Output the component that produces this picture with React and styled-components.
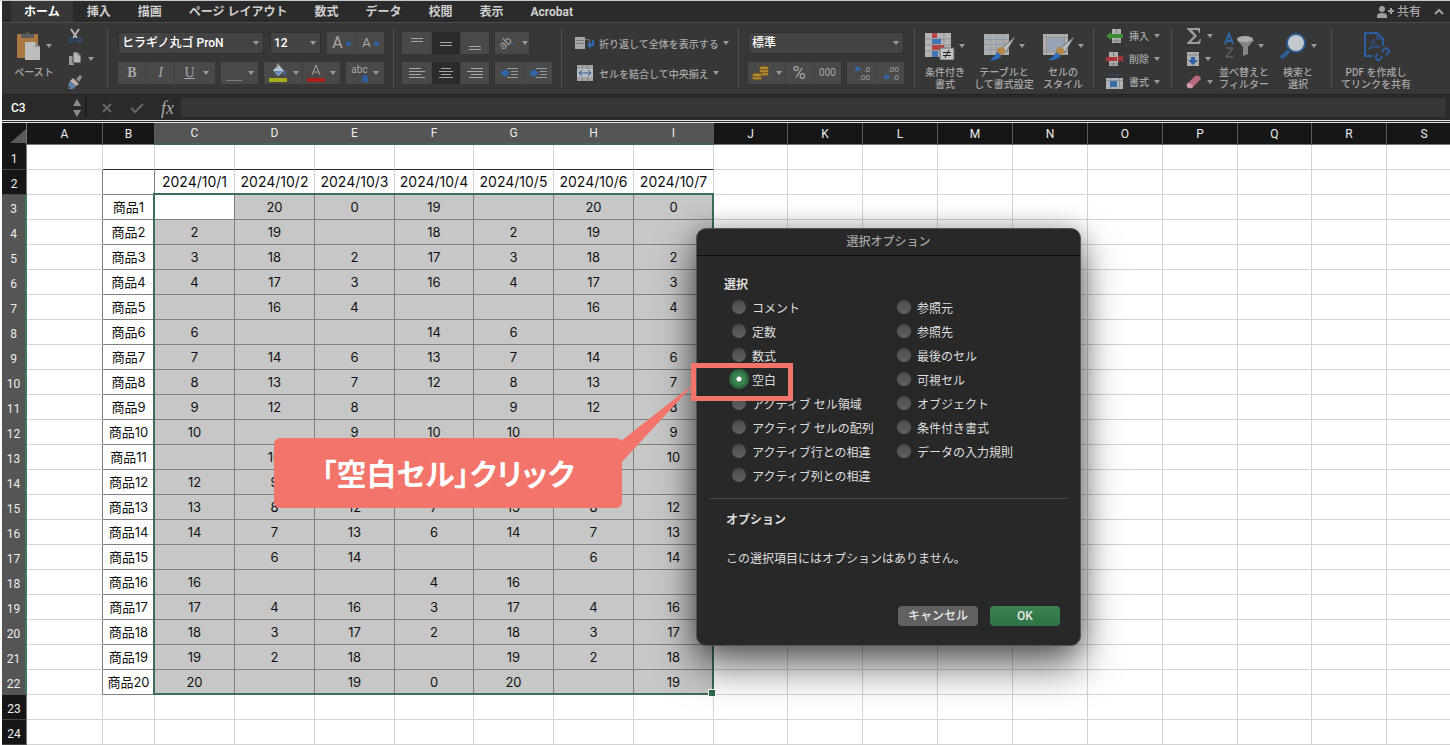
import React from 'react';
import styled, { createGlobalStyle } from 'styled-components';

const TABS = ['ホーム', '挿入', '描画', 'ページ レイアウト', '数式', 'データ', '校閲', '表示', 'Acrobat'];

const COLUMNS = [
  ['A', 76], ['B', 52], ['C', 80], ['D', 80], ['E', 80], ['F', 79], ['G', 80], ['H', 80], ['I', 80], ['J', 74],
  ['K', 75], ['L', 75], ['M', 75], ['N', 75], ['O', 75], ['P', 75], ['Q', 74], ['R', 75], ['S', 75],
];

const DATES = ['2024/10/1', '2024/10/2', '2024/10/3', '2024/10/4', '2024/10/5', '2024/10/6', '2024/10/7'];

const STOCK = [
  ['', 20, 0, 19, '', 20, 0],
  [2, 19, '', 18, 2, 19, ''],
  [3, 18, 2, 17, 3, 18, 2],
  [4, 17, 3, 16, 4, 17, 3],
  ['', 16, 4, '', '', 16, 4],
  [6, '', '', 14, 6, '', ''],
  [7, 14, 6, 13, 7, 14, 6],
  [8, 13, 7, 12, 8, 13, 7],
  [9, 12, 8, '', 9, 12, 8],
  [10, '', 9, 10, 10, '', 9],
  ['', 10, '', '', '', '', 10],
  [12, 9, '', '', '', '', ''],
  [13, 8, 12, 7, 13, 8, 12],
  [14, 7, 13, 6, 14, 7, 13],
  ['', 6, 14, '', '', 6, 14],
  [16, '', '', 4, 16, '', ''],
  [17, 4, 16, 3, 17, 4, 16],
  [18, 3, 17, 2, 18, 3, 17],
  [19, 2, 18, '', 19, 2, 18],
  [20, '', 19, 0, 20, '', 19],
];

const OPTIONS = [
  ['コメント', '定数', '数式', '空白', 'アクティブ セル領域', 'アクティブ セルの配列', 'アクティブ行との相違', 'アクティブ列との相違'],
  ['参照元', '参照先', '最後のセル', '可視セル', 'オブジェクト', '条件付き書式', 'データの入力規則'],
];

const ROW_COUNT = 24;

const cellValue = (row, col) => {
  if (row === 2 && col >= 2 && col <= 8) return DATES[col - 2];
  if (row >= 3 && row <= 22) {
    if (col === 1) return `商品${row - 2}`;
    if (col >= 2 && col <= 8) return STOCK[row - 3][col - 2];
  }
  return '';
};

/* ---------- icons ---------- */

const PasteIcon = () => (
  <svg width="26" height="30" viewBox="0 0 26 30">
    <rect x="1" y="3" width="21" height="24" rx="1" fill="#a9773f" />
    <path d="M5 7V3h4q2-4 5 0h4v4z" fill="#5c5c5c" />
    <path d="M9 11h10l5 5v13H9z" fill="#bdbdbd" />
    <path d="M19 11l5 5h-5z" fill="#8d8d8d" />
  </svg>
);

const CutIcon = () => (
  <svg width="16" height="16" viewBox="0 0 16 16" fill="none">
    <path d="M4 1l6 9M12 1L6 10" stroke="#b5b5b5" strokeWidth="2" />
    <circle cx="4" cy="12" r="2" stroke="#2e4a6d" strokeWidth="2" />
    <circle cx="12" cy="12" r="2" stroke="#2e4a6d" strokeWidth="2" />
  </svg>
);

const CopyIcon = () => (
  <svg width="16" height="16" viewBox="0 0 16 16">
    <path d="M2 5h5v9H2z" fill="#9c9c9c" />
    <path d="M6 1h5l3 3v8H6z" fill="#b9b9b9" stroke="#3a3a3a" />
    <path d="M11 1v3h3" fill="none" stroke="#5a5a5a" />
  </svg>
);

const BrushIcon = () => (
  <svg width="16" height="16" viewBox="0 0 16 16">
    <path d="M9 5l4-4 2 2-3 5z" fill="#8d8d8d" />
    <path d="M6 4l6 6-3 2-6-5z" fill="#c2b0ac" />
    <path d="M3 7l6 5-3 3q-3 1-5-1l3-1-3-1z" fill="#5d83ad" />
  </svg>
);

const BucketIcon = () => (
  <svg width="20" height="20" viewBox="0 0 20 20">
    <path d="M5 7l6-5 5 6-6 5z" fill="#b7c4d2" />
    <path d="M9 6V1q2-1 2 2" fill="none" stroke="#999" />
    <path d="M6 8h9l-5 4z" fill="#5b86b8" />
    <path d="M16 7q3 3 1 5-2-1-1-5z" fill="#3f74b5" />
    <rect x="1" y="15" width="18" height="4" fill="#a8ad1e" />
  </svg>
);

const FontColorIcon = () => (
  <svg width="18" height="20" viewBox="0 0 18 20">
    <path d="M5 12l4-10 4 10M6 9h6" fill="none" stroke="#a3a3a3" />
    <rect x="0" y="15" width="18" height="4" fill="#ab1f1a" />
  </svg>
);

const BorderIcon = () => (
  <svg width="18" height="20" viewBox="0 0 18 20">
    <path d="M1 17.500h16" stroke="#7d7d7d" />
  </svg>
);

const LinesIcon = ({ lines }) => (
  <svg width="18" height="18" viewBox="0 0 18 18" stroke="#a6a6a6">
    {lines.map(([x1, x2, y]) => (
      <path key={y} d={`M${x1} ${y}.5H${x2}`} />
    ))}
  </svg>
);

const IndentIcon = () => (
  <svg width="20" height="16" viewBox="0 0 20 16">
    <path d="M7 3.500h11M11 6.500h7M11 9.500h7M7 12.500h11" stroke="#9a9a9a" />
    <path d="M5 4l5 4-5 4-1-2H1V6h3z" fill="#2e66a8" />
  </svg>
);

const OrientationIcon = () => (
  <svg width="20" height="18" viewBox="0 0 20 18">
    <text x="2" y="14" transform="rotate(-42 7 10)" fontSize="12" fill="#a0a0a0" fontFamily="Roboto, sans-serif">ab</text>
    <path d="M13 9h4l-2 3z" fill="#2e5c92" />
  </svg>
);

const WrapIcon = () => (
  <svg width="20" height="14" viewBox="0 0 20 14">
    <rect x="0" y="1" width="10" height="12" fill="#a6a6a6" />
    <path d="M1 4.500h8M1 7.500h8" stroke="#777" />
    <path d="M10 3.500h4v3" fill="none" stroke="#7a7a7a" />
    <path d="M18 4v5h-3" fill="none" stroke="#2f69ad" strokeWidth="2" />
    <path d="M12 9l4-4v8z" fill="#2f69ad" />
  </svg>
);

const MergeIcon = () => (
  <svg width="16" height="16" viewBox="0 0 16 16">
    <rect x="0" y="0" width="16" height="16" fill="#a3a3a3" />
    <path d="M5.500 0v4M10.500 0v4M5.500 12v4M10.500 12v4" stroke="#858585" />
    <rect x="0" y="4" width="16" height="8" fill="#b5bcc4" />
    <path d="M2 8h12M5 5L2 8l3 3M11 5l3 3-3 3" fill="none" stroke="#2c548a" />
  </svg>
);

const CoinsIcon = () => (
  <svg width="20" height="16" viewBox="0 0 20 16" fill="#b08a35" stroke="#6a5220">
    <ellipse cx="13" cy="9" rx="5" ry="2" />
    <ellipse cx="13" cy="6" rx="5" ry="2" />
    <ellipse cx="13" cy="3" rx="5" ry="2" />
    <ellipse cx="6" cy="13" rx="5" ry="2" />
    <ellipse cx="6" cy="10" rx="5" ry="2" />
  </svg>
);

const DecimalIcon = ({ top, bottom, up }) => (
  <svg width="20" height="18" viewBox="0 0 20 18" fontSize="8" fill="#a3a3a3" fontFamily="Roboto, sans-serif">
    <text x="18" y="8" textAnchor="end">{top}</text>
    <text x="18" y="16" textAnchor="end">{bottom}</text>
    <path d={up ? 'M2 5l4-3v2h3v2H6v2z' : 'M2 13l4-3v2h3v2H6v2z'} fill="#2f69ad" />
  </svg>
);

const ConditionalIcon = () => (
  <svg width="30" height="28" viewBox="0 0 30 28">
    <rect x="0" y="1" width="26" height="24" fill="#b3b3b3" />
    <path d="M0 7h26M0 13h26M0 19h26M19 1v24" stroke="#919191" />
    <path d="M7 1h5v5H7zM7 13h12v5H7z" fill="#b54444" />
    <path d="M7 7h9v5H7zM7 19h6v6H7z" fill="#3f74b5" />
    <rect x="15" y="16" width="14" height="12" fill="#c2c2c2" stroke="#666" />
    <path d="M18 20.500h8M18 23.500h8M24 18l-4 8" stroke="#222" />
  </svg>
);

const SheetBrushIcon = ({ frame }) => (
  <svg width="32" height="30" viewBox="0 0 32 30">
    <rect x="1" y="3" width="25" height="21" fill="#adadad" />
    {frame ? (
      <g>
        <path d="M1 6.500h25M1 20.500h25M4.500 3v21M22.500 3v21" stroke="#979797" />
        <rect x="5" y="7" width="17" height="13" fill="#98a3b6" />
      </g>
    ) : (
      <path d="M1 8.500h25M1 13.500h25M1 18.500h25M7.500 3v21M13.500 3v21M20.500 3v21" stroke="#8d9cb0" />
    )}
    <path d="M32 6l-9 15-4-4z" fill="#b9bfc2" stroke="#707070" />
    <ellipse cx="18" cy="20" rx="4" ry="4" fill="#b1874a" />
    <path d="M14 21l5 4q-5 5-13 4 5-2 8-8z" fill="#2d6cb8" />
  </svg>
);

const CellsIcon = ({ kind }) => (
  <svg width="18" height="16" viewBox="0 0 18 16">
    {kind === 'format' ? (
      <g>
        <rect x="0" y="4" width="17" height="11" fill="#adb3b8" />
        <path d="M0 6.500h17M4.500 4v11M13.500 4v11" stroke="#8d9297" />
        <rect x="4" y="7" width="7" height="6" fill="#3c6ea5" />
        <path d="M2 1h11" stroke="#2f4f7d" />
      </g>
    ) : (
      <g>
        <rect x={kind === 'insert' ? 6 : 3} y="1" width="9" height="14" fill="#b0b0b0" />
        <path d={kind === 'insert' ? 'M10.500 1v4M10.500 11v4M6 13h9' : 'M7.500 1v4M7.500 11v4M3 13h9'} stroke="#7a7a7a" />
        {kind === 'insert' ? (
          <path d="M0 8l5-4v2h12v4H5v2z" fill="#3f8a35" />
        ) : (
          <g>
            <rect x="0" y="6" width="11" height="4" fill="#b0343a" />
            <path d="M12 5l5 5M17 5l-5 5" stroke="#b0343a" strokeWidth="2" />
          </g>
        )}
      </g>
    )}
  </svg>
);

const SigmaIcon = () => (
  <svg width="16" height="18" viewBox="0 0 16 18">
    <path d="M1 1h13v5h-1q0-3-3-3H6l5 6-6 6h6q2 0 3-3h1l-1 5H1v-1l7-7-7-7z" fill="#9c9c9c" />
  </svg>
);

const FillDownIcon = () => (
  <svg width="14" height="16" viewBox="0 0 14 16">
    <rect x="1" y="1" width="12" height="14" fill="#adadad" />
    <path d="M1 4h12" stroke="#858585" />
    <path d="M5 6h4v3h3l-5 5-5-5h3z" fill="#2f62a3" />
  </svg>
);

const EraserIcon = () => (
  <svg width="16" height="16" viewBox="0 0 16 16">
    <path d="M1 10l8-8q2-1 4 0 2 1 2 3l-8 8q-2 2-4 1-3-1-2-4z" fill="#b56a7c" />
    <path d="M1 10q1-2 4 0 2 1 2 3-2 2-4 1-3-1-2-4z" fill="#d39aa8" />
  </svg>
);

const SortIcon = () => (
  <svg width="30" height="28" viewBox="0 0 30 28">
    <path d="M1 12L5 2l4 10M2 9h6" fill="none" stroke="#2f69ad" strokeWidth="2" />
    <path d="M2 16h7l-7 9h7" fill="none" stroke="#777" />
    <path d="M13 8l6 7v9l5-2v-7l6-7z" fill="#858585" />
    <ellipse cx="21" cy="7" rx="8" ry="3" fill="#adadad" />
  </svg>
);

const FindIcon = () => (
  <svg width="28" height="28" viewBox="0 0 28 28">
    <path d="M10 19l-8 7" stroke="#2d5f96" strokeWidth="4" />
    <circle cx="17" cy="11" r="9" fill="#c2c8cc" stroke="#2c5c92" strokeWidth="2" />
  </svg>
);

const PdfIcon = () => (
  <svg width="28" height="30" viewBox="0 0 28 30" fill="none" stroke="#2c5da0" strokeWidth="2">
    <path d="M11 25H3V2h12l6 6v7" />
    <path d="M15 2v6h6" strokeWidth="1" />
    <path d="M6 18q5-3 5-10 1 7 7 8-7-1-12 2z" strokeWidth="1" />
    <path d="M15 23l-1 2q-1 3 2 4 2 0 3-2l1-2M20 21l1-2q2-3 5-1 2 2 0 4l-2 2" />
  </svg>
);

const ShareIcon = () => (
  <svg width="18" height="14" viewBox="0 0 18 14" fill="#a0a0a0">
    <circle cx="6" cy="4" r="3" />
    <path d="M1 13v-2q0-3 5-3t5 3v2z" />
    <path d="M12 5h6v2h-6zM14 3h2v6h-2z" />
  </svg>
);

const ChevronIcon = () => (
  <svg width="10" height="8" viewBox="0 0 10 8">
    <path d="M1 6l4-4 4 4" fill="none" stroke="#a0a0a0" strokeWidth="2" />
  </svg>
);

const StepperIcon = () => (
  <svg width="8" height="18" viewBox="0 0 8 18" fill="#8c8c8c">
    <path d="M4 0l4 7H0zM4 18l4-7H0z" />
  </svg>
);

/* ---------- page ---------- */

const Tool = ({ label, width, active, caret, children }) => (
  <ToolButton type="button" aria-label={label} $width={width} $active={active}>
    {children}
    {caret && <Caret />}
  </ToolButton>
);

const LargeTool = ({ width, icon, lines, caret = true }) => (
  <LargeButton type="button" $width={width}>
    <span className="icon">
      {icon}
      {caret && <Caret />}
    </span>
    {lines.map((line) => (
      <span className="line" key={line}>{line}</span>
    ))}
  </LargeButton>
);

const Picker = ({ label, value, width }) => (
  <PickerBox $width={width}>
    <select aria-label={label} defaultValue={value}>
      <option>{value}</option>
    </select>
    <Caret />
  </PickerBox>
);

const Ribbon = () => (
  <RibbonBar>
    <Group $width={105} $start={5}>
      <LargeTool width={54} icon={<PasteIcon />} lines={['ペースト']} />
      <MiniColumn $start={6}>
        <MiniButton type="button" aria-label="切り取り"><CutIcon /></MiniButton>
        <MiniButton type="button" aria-label="コピー"><CopyIcon /><Caret /></MiniButton>
        <MiniButton type="button" aria-label="書式のコピー"><BrushIcon /></MiniButton>
      </MiniColumn>
    </Group>
    <Divider />
    <Group $width={285} $start={10}>
      <ToolRows>
        <ToolRow>
          <Picker label="フォント" value="ヒラギノ丸ゴ ProN" width={146} />
          <Picker label="フォント サイズ" value="12" width={51} />
          <Segment>
            <Tool label="拡大" width={29}><Glyph $size={16}>A</Glyph><Dot /></Tool>
            <Tool label="縮小" width={28}><Glyph $size={13}>A</Glyph><Dot /></Tool>
          </Segment>
        </ToolRow>
        <ToolRow>
          <Segment>
            <Tool label="太字" width={28}><Glyph $size={14} $serif><b>B</b></Glyph></Tool>
            <Tool label="斜体" width={28}><Glyph $size={14} $serif><i>I</i></Glyph></Tool>
            <Tool label="下線" width={41} caret><Glyph $size={14} $serif $wide><u>U</u></Glyph></Tool>
          </Segment>
          <Segment><Tool label="罫線" width={37} caret><BorderIcon /></Tool></Segment>
          <Segment>
            <Tool label="塗りつぶし" width={38} caret><BucketIcon /></Tool>
            <Tool label="文字色" width={38} caret><FontColorIcon /></Tool>
          </Segment>
          <Segment><Tool label="ふりがな" width={38} caret><Ruby>abc<i /></Ruby></Tool></Segment>
        </ToolRow>
      </ToolRows>
    </Group>
    <Divider />
    <Group $width={167} $start={8}>
      <ToolRows>
        <ToolRow>
          <Segment>
            <Tool label="上揃え" width={29}><LinesIcon lines={[[3, 15, 4], [3, 15, 7]]} /></Tool>
            <Tool label="中央" width={29} active><LinesIcon lines={[[3, 15, 8], [3, 15, 11]]} /></Tool>
            <Tool label="下揃え" width={29}><LinesIcon lines={[[3, 15, 12], [3, 15, 15]]} /></Tool>
          </Segment>
          <Segment><Tool label="方向" width={34} caret><OrientationIcon /></Tool></Segment>
        </ToolRow>
        <ToolRow>
          <Segment>
            <Tool label="左揃え" width={29}><LinesIcon lines={[[1, 13, 4], [1, 17, 7], [1, 13, 10], [1, 17, 13]]} /></Tool>
            <Tool label="中央揃え" width={29} active><LinesIcon lines={[[4, 14, 4], [2, 16, 7], [4, 14, 10], [2, 16, 13]]} /></Tool>
            <Tool label="右揃え" width={29}><LinesIcon lines={[[5, 17, 4], [1, 17, 7], [5, 17, 10], [3, 17, 13]]} /></Tool>
          </Segment>
          <Segment>
            <Tool label="インデント解除" width={29}><IndentIcon /></Tool>
            <Tool label="インデント" width={28}><IndentIcon /></Tool>
          </Segment>
        </ToolRow>
      </ToolRows>
    </Group>
    <Divider />
    <Group $width={176} $start={13}>
      <ToolRows>
        <TextButton type="button"><WrapIcon />折り返して全体を表示する<Caret /></TextButton>
        <TextButton type="button"><MergeIcon />セルを結合して中央揃え<Caret /></TextButton>
      </ToolRows>
    </Group>
    <Divider />
    <Group $width={175} $start={9}>
      <ToolRows>
        <ToolRow><Picker label="表示形式" value="標準" width={156} /></ToolRow>
        <ToolRow>
          <Segment>
            <Tool label="通貨" width={36} caret><CoinsIcon /></Tool>
            <Tool label="パーセント" width={29}><Glyph $size={18}>%</Glyph></Tool>
            <Tool label="桁区切り" width={28}><Glyph $size={10}>000</Glyph></Tool>
          </Segment>
          <Segment>
            <Tool label="小数点以下を増やす" width={29}><DecimalIcon top=".0" bottom=".00" up /></Tool>
            <Tool label="小数点以下を減らす" width={28}><DecimalIcon top=".00" bottom=".0" /></Tool>
          </Segment>
        </ToolRow>
      </ToolRows>
    </Group>
    <Divider />
    <Group $width={178} $start={2}>
      <LargeTool width={56} icon={<ConditionalIcon />} lines={['条件付き', '書式']} />
      <LargeTool width={62} icon={<SheetBrushIcon />} lines={['テーブルと', 'して書式設定']} />
      <LargeTool width={56} icon={<SheetBrushIcon frame />} lines={['セルの', 'スタイル']} />
    </Group>
    <Divider />
    <Group $width={77} $start={12}>
      <MiniColumn>
        <MiniButton type="button"><CellsIcon kind="insert" />挿入<Caret /></MiniButton>
        <MiniButton type="button"><CellsIcon kind="delete" />削除<Caret /></MiniButton>
        <MiniButton type="button"><CellsIcon kind="format" />書式<Caret /></MiniButton>
      </MiniColumn>
    </Group>
    <Divider />
    <Group $width={159} $start={14}>
      <MiniColumn>
        <MiniButton type="button" aria-label="合計"><SigmaIcon /><Caret /></MiniButton>
        <MiniButton type="button" aria-label="フィル"><FillDownIcon /><Caret /></MiniButton>
        <MiniButton type="button" aria-label="クリア"><EraserIcon /><Caret /></MiniButton>
      </MiniColumn>
      <LargeTool width={62} icon={<SortIcon />} lines={['並べ替えと', 'フィルター']} />
      <LargeTool width={46} icon={<FindIcon />} lines={['検索と', '選択']} />
    </Group>
    <Divider />
    <Group $width={90} $start={6}>
      <LargeTool width={76} icon={<PdfIcon />} lines={['PDF を作成し', 'てリンクを共有']} caret={false} />
    </Group>
  </RibbonBar>
);

const Sheet = () => (
  <Grid>
    <colgroup>
      <Col $width={25} />
      {COLUMNS.map(([name, width]) => <Col key={name} $width={width} />)}
    </colgroup>
    <thead>
      <tr>
        <Corner aria-label="すべて選択">
          <svg width="16" height="14" viewBox="0 0 16 14"><path d="M16 0v14H0z" fill="#5a5a5a" /></svg>
        </Corner>
        {COLUMNS.map(([name], i) => (
          <ColumnHead key={name} scope="col" $selected={i >= 2 && i <= 8}>{name}</ColumnHead>
        ))}
      </tr>
    </thead>
    <tbody>
      {Array.from({ length: ROW_COUNT }, (_, i) => i + 1).map((row) => (
        <tr key={row}>
          <RowHead scope="row" $selected={row >= 3 && row <= 22}>{row}</RowHead>
          {COLUMNS.map(([name], col) => {
            const inRange = row >= 3 && row <= 22 && col >= 2 && col <= 8;
            return (
              <Cell
                key={name}
                $date={row === 2}
                $filled={inRange && !(row === 3 && col === 2)}
                $right={row >= 2 && row <= 22 && col <= 8 && (row > 2 || col < 2)}
                $bottom={row >= 2 && row <= 22 && col >= 1 && col <= 8}
                $top={row === 1 && col >= 1 && col <= 8}
              >
                {cellValue(row, col)}
              </Cell>
            );
          })}
        </tr>
      ))}
    </tbody>
  </Grid>
);

const OptionsDialog = () => (
  <Dialog role="dialog" aria-labelledby="dialog-title">
    <h1 id="dialog-title">選択オプション</h1>
    <div className="body">
      <h2>選択</h2>
      <Choices>
        {OPTIONS.map((list) => (
          <div key={list[0]}>
            {list.map((name) => (
              <Choice key={name}>
                <input type="radio" name="target" defaultChecked={name === '空白'} />
                {name}
              </Choice>
            ))}
          </div>
        ))}
      </Choices>
      <hr />
      <div className="details">
        <h2>オプション</h2>
        <p>この選択項目にはオプションはありません。</p>
      </div>
    </div>
    <Actions>
      <ActionButton type="button" $width={80}>キャンセル</ActionButton>
      <ActionButton type="button" $width={70} $primary>OK</ActionButton>
    </Actions>
  </Dialog>
);

const App = () => {
  return (
    <Page>
      <GlobalStyle />
      <TabBar>
        {TABS.map((tab, i) => (
          <Tab key={tab} type="button" $active={i === 0}>{tab}</Tab>
        ))}
        <Share type="button"><ShareIcon />共有</Share>
        <Collapse type="button" aria-label="リボンを折りたたむ"><ChevronIcon /></Collapse>
      </TabBar>
      <Ribbon />
      <FormulaBar>
        <NameBox>
          <input aria-label="名前ボックス" defaultValue="C3" />
          <StepperIcon />
        </NameBox>
        <FormulaTools>
          <svg width="12" height="12" viewBox="0 0 12 12"><path d="M2 2l8 8M10 2l-8 8" stroke="#666" strokeWidth="2" /></svg>
          <svg width="14" height="12" viewBox="0 0 14 12"><path d="M1 6l4 4 8-8" fill="none" stroke="#666" strokeWidth="2" /></svg>
          <em>fx</em>
        </FormulaTools>
        <FormulaInput aria-label="数式バー" />
      </FormulaBar>
      <Workspace>
        <Sheet />
        <Selection />
        <OptionsDialog />
        <Pointer width="74" height="84" viewBox="0 0 74 84">
          <path d="M0 58L74 0 0 80z" fill="#f3746b" />
        </Pointer>
        <Highlight />
        <Callout>「空白セル」クリック</Callout>
      </Workspace>
    </Page>
  );
};

export default App;

const GlobalStyle = createGlobalStyle`
  body {
    margin: 0;
    background: #fff;
  }

  * {
    box-sizing: border-box;
  }

  body, button, input, select {
    font-family: Roboto, 'Noto Sans CJK JP', sans-serif;
  }

  button {
    border: 0;
    padding: 0;
    background: none;
    color: #a8a8a8;
  }

  svg {
    flex: none;
    display: block;
  }
`;

const Page = styled.div`
  padding-left: 2px;
  border-top: 1px solid #c5cbc9;
  overflow: hidden;
`;

const TabBar = styled.nav`
  display: flex;
  gap: 1px;
  height: 21px;
  padding-left: 9px;
  background: #2b2b2b;
`;

const Tab = styled.button`
  padding: 0 13px;
  font-size: 12px;
  font-weight: 700;
  line-height: 18px;
  white-space: nowrap;
  color: ${({ $active }) => ($active ? '#fff' : '#cfcfcf')};
  background: ${({ $active }) => ($active ? '#373737' : 'none')};
`;

const Share = styled.button`
  display: flex;
  align-items: center;
  gap: 3px;
  margin-left: auto;
  font-size: 12px;
  font-weight: 500;
  line-height: 18px;
`;

const Collapse = styled.button`
  padding: 0 6px 0 12px;
`;

const RibbonBar = styled.div`
  display: flex;
  height: 72px;
  padding-top: 1px;
  border-top: 1px solid #4c4c4c;
  background: #373737;
`;

const Group = styled.div`
  display: flex;
  flex: none;
  width: ${({ $width }) => $width}px;
  padding-left: ${({ $start }) => $start}px;
`;

const Divider = styled.div`
  flex: none;
  width: 1px;
  height: 60px;
  margin-top: 4px;
  background: #505050;
`;

const Caret = styled.span`
  flex: none;
  border: 3px solid transparent;
  border-top: 4px solid #9a9a9a;
  border-bottom: 0;
`;

const ToolRows = styled.div`
  display: flex;
  flex-direction: column;
  gap: 8px;
  padding-top: 8px;
`;

const ToolRow = styled.div`
  display: flex;
  gap: 6px;
  height: 22px;
`;

const Segment = styled.div`
  display: flex;
  background: #494949;
`;

const ToolButton = styled.button`
  display: flex;
  align-items: center;
  justify-content: center;
  gap: 5px;
  width: ${({ $width }) => $width}px;
  height: 22px;
  overflow: hidden;
  background: ${({ $active }) => ($active ? '#2b2b2b' : 'none')};

  & + & {
    border-left: 1px solid #424242;
  }
`;

const Glyph = styled.span`
  font-family: ${({ $serif }) => ($serif ? "'Liberation Serif', serif" : 'Roboto, sans-serif')};
  font-size: ${({ $size }) => $size}px;
  line-height: 20px;
  padding: 0 ${({ $wide }) => ($wide ? 3 : 0)}px;
`;

const Dot = styled.span`
  width: 5px;
  height: 5px;
  margin-left: -2px;
  border-radius: 50%;
  background: #2e5f9c;
`;

const Ruby = styled.span`
  display: flex;
  flex-direction: column;
  align-items: flex-end;
  font-size: 10px;
  line-height: 10px;

  i {
    width: 6px;
    height: 7px;
    border-radius: 3px 3px 0 0;
    background: #2f5f9a;
  }
`;

const PickerBox = styled.div`
  display: flex;
  align-items: center;
  width: ${({ $width }) => $width}px;
  height: 22px;
  padding-right: 4px;
  border: 1px solid #303030;
  background: #434343;

  select {
    flex: 1;
    min-width: 0;
    height: 20px;
    padding: 0 3px;
    border: 0;
    appearance: none;
    background: none;
    color: #fff;
    font-size: 12px;
    font-weight: 500;
  }
`;

const TextButton = styled.button`
  display: flex;
  align-items: center;
  gap: 4px;
  height: 22px;
  font-size: 10px;
  font-weight: 500;
  white-space: nowrap;

  svg {
    width: 20px;
  }
`;

const LargeButton = styled.button`
  display: flex;
  flex-direction: column;
  align-items: center;
  width: ${({ $width }) => $width}px;
  padding-top: 7px;
  font-size: 10px;
  font-weight: 500;

  .icon {
    display: flex;
    align-items: center;
    gap: 4px;
    height: 30px;
    margin-bottom: 6px;
  }

  .line {
    line-height: 12px;
    white-space: nowrap;
  }
`;

const MiniColumn = styled.div`
  display: flex;
  flex-direction: column;
  margin-left: ${({ $start = 0 }) => $start}px;
`;

const MiniButton = styled.button`
  display: flex;
  align-items: center;
  gap: 5px;
  height: 23px;
  font-size: 10px;
  font-weight: 500;
  white-space: nowrap;
`;

const FormulaBar = styled.div`
  display: flex;
  height: 29px;
  padding: 3px 4px 3px 0;
  border-top: 1px solid #222;
  border-bottom: 3px double #e4e4e4;
  background: #2a2a2a;
`;

const NameBox = styled.div`
  display: flex;
  align-items: center;
  width: 85px;
  padding-right: 4px;
  border-right: 2px solid #1e1e1e;

  input {
    flex: 1;
    min-width: 0;
    padding: 0 9px;
    border: 0;
    background: none;
    color: #fff;
    font-size: 12px;
    font-weight: 500;
  }
`;

const FormulaTools = styled.div`
  display: flex;
  align-items: center;
  gap: 17px;
  width: 94px;
  padding-left: 14px;

  em {
    color: #a8a8a8;
    font-family: 'Liberation Serif', serif;
    font-size: 18px;
    line-height: 20px;
  }
`;

const FormulaInput = styled.input`
  flex: 1;
  min-width: 0;
  border: 0;
  background: #373737;
  color: #fff;
`;

const Workspace = styled.main`
  position: relative;
`;

const Grid = styled.table`
  table-layout: fixed;
  width: 0;
  border-collapse: separate;
  border-spacing: 0;
`;

const Col = styled.col`
  width: ${({ $width }) => $width}px;
`;

const Corner = styled.td`
  height: 22px;
  padding: 3px 0 0 8px;
  border-right: 1px solid #777;
  background: #161616;
`;

const ColumnHead = styled.th`
  height: 22px;
  padding: 0;
  border-right: 1px solid ${({ $selected }) => ($selected ? '#555' : '#5a5a5a')};
  border-bottom: ${({ $selected }) => ($selected ? '2px solid #3d6b57' : '1px solid #777')};
  background: ${({ $selected }) => ($selected ? '#555' : '#161616')};
  color: #ececec;
  font-size: 12px;
  font-weight: 400;
  line-height: 18px;
`;

const RowHead = styled.th`
  height: 25px;
  padding: 4px 0 0;
  border-right: ${({ $selected }) => ($selected ? '2px solid #3d7a5c' : '1px solid #777')};
  border-bottom: 1px solid ${({ $selected }) => ($selected ? '#555' : '#444')};
  background: ${({ $selected }) => ($selected ? '#555' : '#161616')};
  color: #ececec;
  font-size: 12px;
  font-weight: 400;
  line-height: 20px;
`;

const Cell = styled.td`
  height: 25px;
  padding: 0;
  border-right: 1px solid ${({ $right }) => ($right ? '#808080' : '#d4d4d4')};
  border-bottom: 1px solid ${({ $bottom, $top }) => ($top ? '#2a2a2a' : $bottom ? '#808080' : '#d4d4d4')};
  background: ${({ $filled }) => ($filled ? '#c6c7c6' : '#fff')};
  color: #111;
  font-family: Inter, 'Noto Sans CJK JP', sans-serif;
  font-size: ${({ $date }) => ($date ? 14 : 13)}px;
  line-height: 24px;
  text-align: center;
  white-space: nowrap;
`;

const Selection = styled.div`
  position: absolute;
  top: 70px;
  left: 151px;
  width: 561px;
  height: 502px;
  border: 2px solid #3a6e55;
  pointer-events: none;

  &::after {
    content: '';
    position: absolute;
    right: -4px;
    bottom: -4px;
    width: 6px;
    height: 6px;
    border: 1px solid #fff;
    background: #2f6b4c;
  }
`;

const Dialog = styled.section`
  position: absolute;
  top: 105px;
  left: 694px;
  width: 385px;
  border: 1px solid #555;
  border-radius: 10px;
  background: #282828;
  color: #dedede;
  font-size: 12px;
  box-shadow: 0 20px 40px rgba(0, 0, 0, 0.6), 0 0 24px rgba(0, 0, 0, 0.25);

  h1 {
    height: 27px;
    margin: 0;
    border-bottom: 1px solid #0d0d0d;
    color: #a5a5a5;
    font-size: 12px;
    font-weight: 500;
    line-height: 26px;
    text-align: center;
  }

  .body {
    padding: 20px 12px 0;
  }

  .details {
    padding-left: 2px;
  }

  h2 {
    margin: 0 15px;
    font-size: 12px;
    font-weight: 700;
    line-height: 18px;
  }

  hr {
    height: 1px;
    margin: 11px 0 12px;
    border: 0;
    background: #454545;
  }

  p {
    margin: 20px 15px 0;
    line-height: 20px;
  }
`;

const Choices = styled.div`
  display: grid;
  grid-template-columns: 165px 1fr;
  padding: 1px 0 0 20px;
`;

const Choice = styled.label`
  display: flex;
  align-items: center;
  gap: 3px;
  height: 24px;
  white-space: nowrap;

  input {
    width: 20px;
    height: 20px;
    margin: 0;
    appearance: none;
    border: 3px solid transparent;
    border-radius: 50%;
    background: linear-gradient(#4a4a4a, #616161) padding-box;
  }

  input:checked {
    border-color: #2b6b3f;
    background: radial-gradient(circle, #fff 2px, #3a8450 3px);
  }
`;

const Actions = styled.div`
  display: flex;
  justify-content: flex-end;
  gap: 12px;
  padding: 37px 20px 19px;
`;

const ActionButton = styled.button`
  width: ${({ $width }) => $width}px;
  height: 20px;
  border-radius: 4px;
  background: ${({ $primary }) => ($primary ? 'linear-gradient(#3b8350, #2e7344)' : '#616161')};
  color: #e8e8e8;
  font-size: 12px;
  font-weight: 500;
  line-height: 20px;
`;

const Pointer = styled.svg`
  position: absolute;
  top: 260px;
  left: 619px;
`;

const Highlight = styled.div`
  position: absolute;
  top: 240px;
  left: 689px;
  width: 102px;
  height: 38px;
  border: 5px solid #f3746b;
`;

const Callout = styled.div`
  position: absolute;
  top: 315px;
  left: 272px;
  width: 348px;
  height: 70px;
  border-radius: 6px;
  background: #f3746b;
  color: #fff;
  font-family: 'Noto Sans CJK JP', sans-serif;
  font-size: 30px;
  font-weight: 700;
  font-feature-settings: 'palt';
  line-height: 68px;
  text-align: center;
`;
